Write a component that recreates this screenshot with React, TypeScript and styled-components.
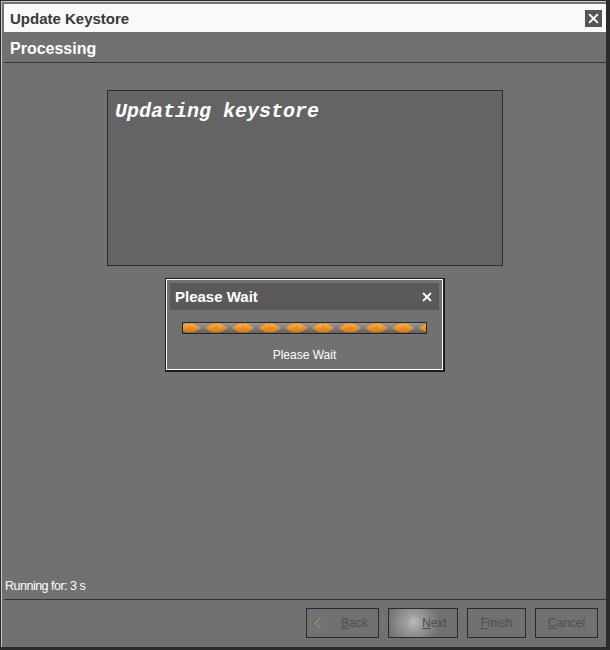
import React from "react";
import styled, { createGlobalStyle } from "styled-components";

const Global = createGlobalStyle`
  html, body { margin: 0; padding: 0; background: #ffffff; }
  body { font-family: "Liberation Sans", Arial, sans-serif; }
`;

const Window = styled.div`
  width: 610px;
  height: 650px;
  box-sizing: border-box;
  display: flex;
  flex-direction: column;
  background: #717171;
  border-style: solid;
  border-color: #2b2b2b;
  border-width: 1px 4px 3px 1px;
  box-shadow: inset 1px 1px 0 #c8c8c8;
  padding: 3px 0 0 3px;
  font-family: "Liberation Sans", Arial, sans-serif;
`;

const TitleBar = styled.div`
  height: 28px;
  flex: none;
  display: flex;
  align-items: center;
  justify-content: space-between;
  background: #f9f9f9;
  padding: 0 4px 0 6px;
`;

const TitleText = styled.span`
  font-size: 15px;
  font-weight: bold;
  color: #383838;
`;

const TitleClose = styled.button`
  width: 17px;
  height: 17px;
  padding: 0;
  border: none;
  background: #555555;
  display: flex;
  align-items: center;
  justify-content: center;
`;

const Heading = styled.div`
  height: 30px;
  box-sizing: border-box;
  flex: none;
  display: flex;
  align-items: center;
  padding: 3px 0 0 6px;
  font-size: 16px;
  font-weight: bold;
  color: #ffffff;
`;

const Rule = styled.div`
  height: 1px;
  flex: none;
  background: #333333;
`;

const Body = styled.div`
  flex: 1;
  display: flex;
  flex-direction: column;
  align-items: center;
  padding-top: 27px;
`;

const LogBox = styled.div`
  width: 396px;
  height: 176px;
  box-sizing: border-box;
  border: 1px solid #2b2b2b;
  background: #646464;
  padding: 9px 7px;
  font-family: "Liberation Mono", "Courier New", monospace;
  font-size: 20px;
  line-height: 24px;
  font-style: italic;
  font-weight: bold;
  color: #ffffff;
`;

const Dialog = styled.div`
  margin-top: 12px;
  width: 280px;
  box-sizing: border-box;
  border-style: solid;
  border-color: #1e1e1e;
  border-width: 1px 2px 2px 1px;
`;

const DialogInner = styled.div`
  border: 1px solid #ffffff;
  padding: 3px;
  display: flex;
  flex-direction: column;
  background: #717171;
`;

const DialogHeader = styled.div`
  height: 27px;
  display: flex;
  align-items: center;
  justify-content: space-between;
  background: #595959;
  padding: 0 7px 0 5px;
  font-size: 15px;
  font-weight: bold;
  color: #ffffff;
`;

const Progress = styled.div`
  margin: 12px 12px 0;
  height: 12px;
  box-sizing: border-box;
  border: 1px solid #262626;
  background: linear-gradient(#9a9a9a, #7c7c7c 50%, #606060);
  overflow: hidden;
  display: flex;
`;

const DialogText = styled.div`
  margin: 15px 0 5px;
  text-align: center;
  font-size: 12px;
  line-height: 12px;
  color: #ffffff;
`;

const Status = styled.div`
  margin: 0 0 6px 1px;
  font-size: 12.5px;
  line-height: 13px;
  letter-spacing: -0.5px;
  color: #ffffff;
`;

const ButtonRow = styled.div`
  flex: none;
  display: flex;
  justify-content: flex-end;
  gap: 9px;
  padding: 8px 8px 9px 0;
`;

const WizardButton = styled.button<{ $width: number; $glow?: boolean; $icon?: boolean }>`
  width: ${(p) => p.$width}px;
  height: 30px;
  box-sizing: border-box;
  border: 1px solid #2a2a2a;
  background: ${(p) =>
    p.$glow
      ? "radial-gradient(circle at 36% 47%, #bdbdbd 0, #a0a0a0 7px, rgba(113,113,113,0) 26px), #717171"
      : "#717171"};
  display: flex;
  align-items: center;
  justify-content: ${(p) => (p.$icon ? "flex-start" : "center")};
  padding: ${(p) => (p.$icon ? "0 0 0 7px" : "0")};
  font-family: "Liberation Sans", Arial, sans-serif;
  font-size: 12px;
  color: #4e4e4e;
`;

const ButtonLabel = styled.span<{ $offset: number }>`
  margin-left: ${(p) => p.$offset}px;
`;

const Mnemonic = styled.span`
  text-decoration: underline;
`;

const Chevron = ({ dir }: { dir: "left" | "right" }) => (
  <svg width="8" height="12" viewBox="0 0 8 12" style={{ flex: "none", position: "relative", zIndex: 1 }}>
    <path
      d={dir === "left" ? "M6.5 0.5 L1 6 L6.5 11.5" : "M1.5 0.5 L7 6 L1.5 11.5"}
      fill="none"
      stroke="#b99a5c"
      strokeWidth="1"
    />
  </svg>
);

const CloseGlyph = ({ size, stroke }: { size: number; stroke: number }) => (
  <svg width={size} height={size} viewBox="0 0 10 10">
    <path d="M1 1 L9 9 M9 1 L1 9" stroke="#ffffff" strokeWidth={stroke} fill="none" />
  </svg>
);

const ProgressStripes = () => (
  <svg width="100%" height="10" style={{ display: "block" }}>
    <defs>
      <linearGradient id="lensFill" x1="0" y1="0" x2="0" y2="1">
        <stop offset="0" stopColor="#f7b865" />
        <stop offset="0.45" stopColor="#f2951f" />
        <stop offset="1" stopColor="#d9780f" />
      </linearGradient>
      <pattern id="lens" x="-4.3" y="0" width="26.7" height="10" patternUnits="userSpaceOnUse">
        <path d="M0 5 Q11 -4 22 5 Q11 14 0 5 Z" fill="url(#lensFill)" />
        <line x1="11" y1="0.8" x2="11" y2="9.2" stroke="#c9761a" strokeWidth="0.6" />
      </pattern>
    </defs>
    <rect x="0" y="0" width="100%" height="10" fill="url(#lens)" />
  </svg>
);

export default function App() {
  return (
    <>
      <Global />
      <Window>
        <TitleBar>
          <TitleText>Update Keystore</TitleText>
          <TitleClose aria-label="Close">
            <CloseGlyph size={11} stroke={1.8} />
          </TitleClose>
        </TitleBar>
        <Heading>Processing</Heading>
        <Rule />
        <Body>
          <LogBox>Updating keystore</LogBox>
          <Dialog>
            <DialogInner>
              <DialogHeader>
                <span>Please Wait</span>
                <CloseGlyph size={10} stroke={1.8} />
              </DialogHeader>
              <Progress>
                <ProgressStripes />
              </Progress>
              <DialogText>Please Wait</DialogText>
            </DialogInner>
          </Dialog>
        </Body>
        <Status>Running for: 3 s</Status>
        <Rule />
        <ButtonRow>
          <WizardButton $width={73} $icon>
            <Chevron dir="left" />
            <ButtonLabel $offset={19}>
              <Mnemonic>B</Mnemonic>ack
            </ButtonLabel>
          </WizardButton>
          <WizardButton $width={70} $icon $glow>
            <Chevron dir="right" />
            <ButtonLabel $offset={18}>
              <Mnemonic>N</Mnemonic>ext
            </ButtonLabel>
          </WizardButton>
          <WizardButton $width={59}>
            <span>
              <Mnemonic>F</Mnemonic>inish
            </span>
          </WizardButton>
          <WizardButton $width={63}>
            <span>
              <Mnemonic>C</Mnemonic>ancel
            </span>
          </WizardButton>
        </ButtonRow>
      </Window>
    </>
  );
}
